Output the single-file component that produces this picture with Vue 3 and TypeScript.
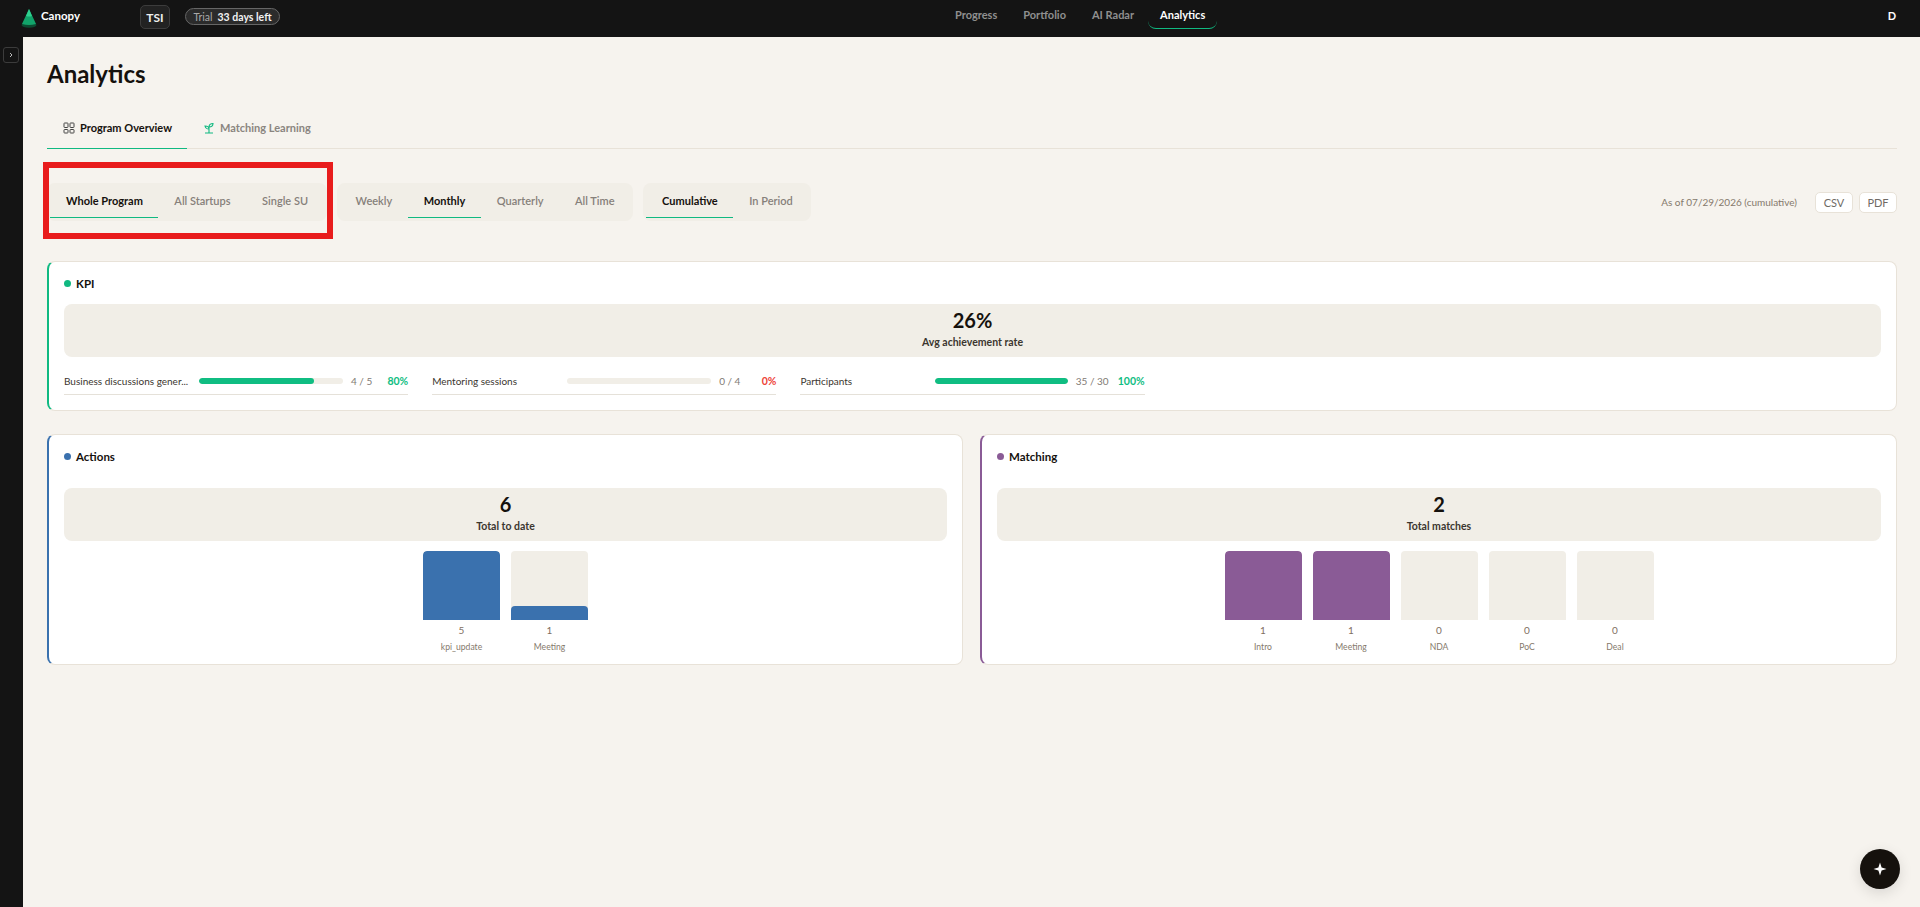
<script setup lang="ts">
interface Kpi { label: string; value: string; pct: number; shown: string; color: string }
interface Bar { label: string; value: number; fill: number }

const nav: string[] = ['Progress', 'Portfolio', 'AI Radar', 'Analytics']
const filterGroups: { items: string[]; active: string }[] = [
  { items: ['Whole Program', 'All Startups', 'Single SU'], active: 'Whole Program' },
  { items: ['Weekly', 'Monthly', 'Quarterly', 'All Time'], active: 'Monthly' },
  { items: ['Cumulative', 'In Period'], active: 'Cumulative' },
]
const kpis: Kpi[] = [
  { label: 'Business discussions gener...', value: '4 / 5', pct: 80, shown: '80%', color: 'good' },
  { label: 'Mentoring sessions', value: '0 / 4', pct: 0, shown: '0%', color: 'bad' },
  { label: 'Participants', value: '35 / 30', pct: 100, shown: '100%', color: 'good' },
]
const actions: Bar[] = [
  { label: 'kpi_update', value: 5, fill: 100 },
  { label: 'Meeting', value: 1, fill: 20 },
]
const matching: Bar[] = [
  { label: 'Intro', value: 1, fill: 100 },
  { label: 'Meeting', value: 1, fill: 100 },
  { label: 'NDA', value: 0, fill: 0 },
  { label: 'PoC', value: 0, fill: 0 },
  { label: 'Deal', value: 0, fill: 0 },
]
</script>

<template>
  <div class="app">
    <header class="topbar">
      <div class="brand">
        <svg width="16" height="19" viewBox="0 0 16 19" class="logo">
          <ellipse cx="8" cy="16" rx="7.5" ry="2.8" fill="#0c4a31" />
          <path d="M8 0 L15 15 Q8 17 1 15 Z" fill="#12a36a" />
          <path d="M8 0 L11 7 Q8 8 5 7 Z" fill="#2fd08f" />
        </svg>
        <span class="brand-name">Canopy</span>
      </div>
      <div class="org">TSI</div>
      <div class="trial"><span class="trial-a">Trial</span><b>33 days left</b></div>
      <nav class="nav">
        <a v-for="n in nav" :key="n" class="nav-item" :class="{ on: n === 'Analytics' }">{{ n }}</a>
      </nav>
      <div class="user">D</div>
    </header>

    <div class="body">
      <aside class="side">
        <button class="toggle">
          <svg width="6" height="6" viewBox="0 0 6 6"><path d="M2 1 L4 3 L2 5" fill="none" stroke="#bbb" stroke-width="1" /></svg>
        </button>
      </aside>
      <main class="main">
        <h1 class="title">Analytics</h1>
        <div class="tabs">
          <div class="tab on">
            <svg width="12" height="12" viewBox="0 0 12 12" fill="none" stroke="#444" stroke-width="1">
              <rect x="1" y="1" width="4" height="4.5" rx=".6" />
              <rect x="7" y="1" width="4" height="4.5" rx=".6" />
              <rect x="1" y="7.5" width="4" height="3.5" rx=".6" />
              <rect x="7" y="7.5" width="4" height="3.5" rx=".6" />
            </svg>
            <span>Program Overview</span>
          </div>
          <div class="tab">
            <svg width="12" height="12" viewBox="0 0 12 12" fill="none" stroke="#10b981" stroke-width="1.1">
              <path d="M6 11 V5 M2 11 H10 M6 7 C4.5 7 2.5 6.5 2 4 C4 4 6 4.5 6 7 Z M6 5 C6 3 7.5 1.5 10 1.5 C10 3.5 8.5 5 6 5 Z" />
            </svg>
            <span>Matching Learning</span>
          </div>
        </div>

        <div class="filters">
          <div v-for="(g, i) in filterGroups" :key="i" class="group">
            <button v-for="f in g.items" :key="f" class="seg" :class="{ on: f === g.active }">{{ f }}</button>
          </div>
          <div class="exports">
            <span class="asof">As of 07/29/2026 (cumulative)</span>
            <button class="btn">CSV</button>
            <button class="btn">PDF</button>
          </div>
        </div>

        <section class="card green kpi">
          <div class="card-head"><i class="dot"></i><span>KPI</span></div>
          <div class="stat">
            <div class="stat-num">26%</div>
            <div class="stat-lbl">Avg achievement rate</div>
          </div>
          <div class="kpi-grid">
            <div v-for="k in kpis" :key="k.label" class="kpi-row">
              <span class="kpi-label">{{ k.label }}</span>
              <span class="track"><span class="fill" :style="{ width: k.pct + '%' }"></span></span>
              <span class="kpi-val">{{ k.value }}</span>
              <span class="kpi-pct" :class="k.color">{{ k.shown }}</span>
            </div>
          </div>
        </section>

        <div class="two">
          <section class="card blue">
            <div class="card-head"><i class="dot"></i><span>Actions</span></div>
            <div class="stat spaced">
              <div class="stat-num">6</div>
              <div class="stat-lbl">Total to date</div>
            </div>
            <div class="chart">
              <div v-for="b in actions" :key="b.label" class="col">
                <div class="bar"><div class="bar-fill" :style="{ height: b.fill + '%' }"></div></div>
                <div class="col-val">{{ b.value }}</div>
                <div class="col-lbl">{{ b.label }}</div>
              </div>
            </div>
          </section>
          <section class="card purple">
            <div class="card-head"><i class="dot"></i><span>Matching</span></div>
            <div class="stat spaced">
              <div class="stat-num">2</div>
              <div class="stat-lbl">Total matches</div>
            </div>
            <div class="chart">
              <div v-for="b in matching" :key="b.label" class="col">
                <div class="bar"><div class="bar-fill" :style="{ height: b.fill + '%' }"></div></div>
                <div class="col-val">{{ b.value }}</div>
                <div class="col-lbl">{{ b.label }}</div>
              </div>
            </div>
          </section>
        </div>
      </main>
    </div>

    <div class="annotation"></div>
    <button class="fab">
      <svg width="14" height="14" viewBox="0 0 14 14"><path d="M7 .5 L8.6 5.4 L13.5 7 L8.6 8.6 L7 13.5 L5.4 8.6 L.5 7 L5.4 5.4 Z" fill="#fff" /></svg>
    </button>
  </div>
</template>

<style>
html, body { margin: 0; height: 100%; overflow: hidden; }
</style>

<style scoped>
* { box-sizing: border-box; }
.app {
  position: relative;
  height: 907px;
  display: flex;
  flex-direction: column;
  font-family: "Lato", "Open Sans", sans-serif;
  background: #141414;
  color: #15110d;
}
button { font-family: inherit; }

.topbar {
  height: 37px;
  flex: none;
  display: flex;
  align-items: center;
  padding: 0 21px;
  color: #fff;
}
.brand { display: flex; align-items: center; width: 119px; margin-top: -4px; }
.logo { margin-right: 4px; margin-top: 4px; }
.brand-name { font-size: 11.5px; font-weight: 700; margin-top: -2px; }
.org {
  width: 30px; height: 24px;
  margin-top: -3px;
  display: flex; align-items: center; justify-content: center;
  font-size: 12px; font-weight: 700;
  color: #eee;
  background: #222;
  border: 1px solid #3c3c3c;
  border-radius: 5px;
}
.trial {
  margin-left: 15px;
  margin-top: -4px;
  height: 17px;
  width: 95px;
  display: flex; align-items: center; justify-content: center;
  gap: 5px;
  font-size: 10.5px;
  background: #2b2b2b;
  border: 1px solid #666;
  border-radius: 9px;
}
.trial-a { color: #a9a9a9; }
.trial b { font-weight: 700; color: #f2f2f2; }
.nav {
  margin-left: 662px;
  align-self: flex-start;
  display: flex;
}
.nav-item {
  height: 29px;
  padding: 0 12px;
  margin: 0 1px;
  display: flex; align-items: center;
  font-size: 11px; font-weight: 700;
  color: #8f8f8f;
  border-radius: 0 0 8px 8px;
  border-bottom: 1px solid transparent;
}
.nav-item.on { color: #fff; border-bottom-color: #10b981; }
.user { margin-left: auto; margin-right: 3px; margin-top: -6px; font-size: 11px; font-weight: 700; }

.body { flex: 1; display: flex; min-height: 0; }
.side { width: 23px; flex: none; padding: 10px 0 0 3px; }
.toggle {
  width: 16px; height: 16px;
  padding: 0;
  display: flex; align-items: center; justify-content: center;
  background: transparent;
  border: 1px solid #3c3c3c;
  border-radius: 3px;
}

.main {
  flex: 1;
  min-width: 0;
  background: #f6f3ee;
  padding: 22px 23px 0 24px;
}
.title { margin: 0; font-size: 24px; line-height: 30px; font-weight: 700; }

.tabs {
  margin-top: 21px;
  display: flex;
  border-bottom: 1px solid #e8e2d8;
}
.tab {
  height: 39px;
  margin-bottom: -1px;
  padding: 0 15px 3px 16px;
  display: flex; align-items: center;
  gap: 5px;
  font-size: 11px;
  font-weight: 700;
  color: #8a8580;
  border-bottom: 1px solid transparent;
}
.tab.on { color: #15110d; border-bottom-color: #10b981; }

.filters {
  margin-top: 34px;
  display: flex;
  align-items: center;
  gap: 10px;
}
.group {
  display: flex;
  height: 38px;
  padding: 3px;
  background: #f1eee7;
  border-radius: 8px;
}
.seg {
  padding: 0 15.5px 2px 16px;
  background: transparent;
  border: 0;
  border-bottom: 1px solid transparent;
  font-size: 11px;
  font-weight: 600;
  color: #86807a;
}
.seg.on { color: #15110d; font-weight: 700; border-bottom-color: #10b981; }
.exports { margin-left: auto; display: flex; align-items: center; gap: 6px; }
.asof { font-size: 10px; color: #85796c; margin-right: 12px; }
.btn {
  height: 21px;
  width: 38px;
  padding: 0;
  font-size: 11px;
  color: #6f6a64;
  background: #fff;
  border: 1px solid #e8e2d8;
  border-radius: 5px;
}

.card {
  background: #fff;
  border: 1px solid #e8e2d8;
  border-left-width: 2px;
  border-radius: 8px;
  padding: 12px 15px 0 15px;
}
.card.green { border-left-color: #10b981; }
.card.blue { border-left-color: #3a71ae; }
.card.purple { border-left-color: #8a5b96; }
.card-head {
  display: flex;
  align-items: center;
  gap: 5px;
  height: 18px;
  font-size: 11.5px;
  font-weight: 700;
}
.dot { width: 7px; height: 7px; border-radius: 50%; }
.green .dot { background: #10b981; }
.blue .dot { background: #3a71ae; }
.purple .dot { background: #8a5b96; }
.stat {
  height: 53px;
  margin-top: 12px;
  background: #f1eee7;
  border-radius: 8px;
  text-align: center;
}
.stat.spaced { margin-top: 23px; }
.stat-num { font-size: 20px; font-weight: 700; line-height: 24px; padding-top: 4px; }
.stat-lbl { font-size: 10.5px; font-weight: 700; line-height: 16px; color: #3b362f; margin-top: 2px; }

.kpi { margin-top: 40px; height: 150px; }
.kpi-grid {
  margin-top: 13px;
  display: grid;
  grid-template-columns: repeat(5, 1fr);
  gap: 24px;
}
.kpi-row {
  display: flex;
  align-items: center;
  height: 25px;
  padding-bottom: 3px;
  border-bottom: 1px solid #e5e1d9;
}
.kpi-label {
  width: 127px;
  flex: none;
  margin-right: 8px;
  font-size: 10px;
  color: #3b362f;
  white-space: nowrap;
}
.track {
  flex: 1;
  height: 6px;
  background: #f1eee7;
  border-radius: 3px;
  overflow: hidden;
}
.fill { display: block; height: 100%; background: #10bd82; border-radius: 3px; }
.kpi-val { margin-left: 8px; font-size: 10px; color: #7f7a74; }
.kpi-pct { width: 36px; flex: none; text-align: right; font-size: 10.5px; font-weight: 700; }
.kpi-pct.good { color: #10bd82; }
.kpi-pct.bad { color: #ee4337; }

.two {
  margin-top: 23px;
  display: grid;
  grid-template-columns: 916px 1fr;
  gap: 17px;
}
.two .card { height: 231px; }
.chart {
  margin-top: 10px;
  display: flex;
  justify-content: center;
  gap: 11px;
}
.col { width: 77px; text-align: center; }
.bar {
  height: 69px;
  display: flex;
  align-items: flex-end;
  background: #f1eee7;
  border-radius: 4px 4px 0 0;
  overflow: hidden;
}
.bar-fill { width: 100%; border-radius: 4px 4px 0 0; }
.blue .bar-fill { background: #3a71ae; }
.purple .bar-fill { background: #8a5b96; }
.col-val { margin-top: 3px; font-size: 10px; line-height: 14px; color: #7f6f5f; }
.col-lbl { margin-top: 3px; font-size: 8.6px; line-height: 14px; color: #85796c; }

.annotation {
  position: absolute;
  left: 43px;
  top: 162px;
  width: 290px;
  height: 77px;
  border: 6px solid #e81c1c;
  pointer-events: none;
}
.fab {
  position: absolute;
  left: 1860px;
  top: 849px;
  width: 40px;
  height: 40px;
  padding: 0;
  display: flex; align-items: center; justify-content: center;
  background: #15110d;
  border: 0;
  border-radius: 50%;
  box-shadow: 0 4px 14px rgba(0, 0, 0, .12);
}
</style>
